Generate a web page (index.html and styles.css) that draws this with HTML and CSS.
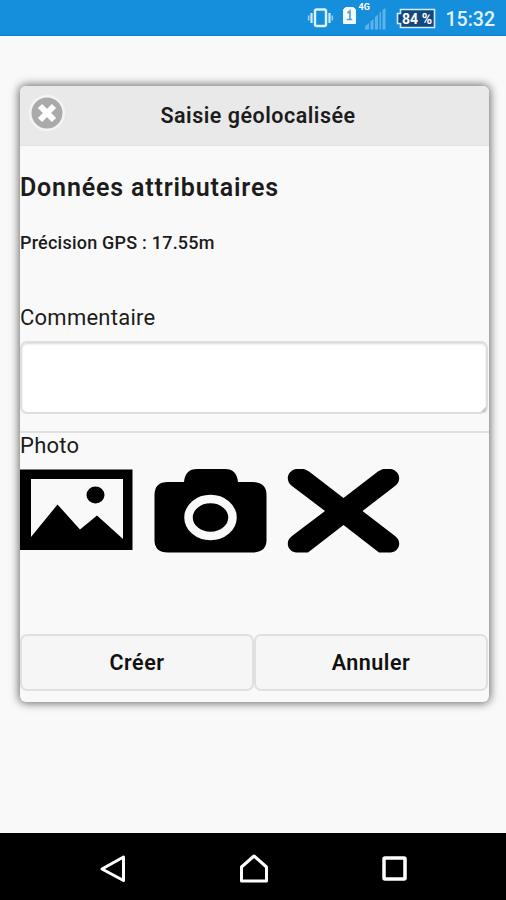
FILE: index.html
```html
<!DOCTYPE html>
<html lang="fr">

<head>
    <meta charset="UTF-8">
    <title>Saisie géolocalisée</title>
    <link rel="stylesheet" href="styles.css">
</head>

<body>

    <div class="statut">
        <svg class="vibreur" width="28" height="22" viewBox="0 0 28 22">
            <rect x="9" y="2.5" width="11" height="16.5" rx="1.5" fill="none" stroke="#dff2ff" stroke-width="2.4" />
            <path d="M5.5 6v10M23.5 6v10" stroke="#cdeaff" stroke-width="2.2" />
            <path d="M2.7 8.5v5M26.3 8.5v5" stroke="#9bd0f4" stroke-width="1.6" />
        </svg>
        <svg class="reseau" width="46" height="32" viewBox="0 0 46 32">
            <path d="M4.5 7.5h8l2 2v14h-12v-14z" fill="#f2faff" stroke="#f2faff" />
            <path d="M6.5 13l2.500-2v8.500M5.800 19.500h5.400" fill="none" stroke="#5e9fca" stroke-width="1.700" />
            <text x="17.500" y="10" class="type">4G</text>
            <path d="M24 29.500v-3l4-3.500v6.500zM29.500 29.500v-8l3-2.500v10.500zM34 29.500v-12.500l3-2.500v15zM38.500 29.500v-16.500l1.500-1.500v18zM41.500 29.500v-19.500l3-2v21.500z" fill="#5db2ea" />
        </svg>
        <svg class="batterie" width="40" height="22" viewBox="0 0 40 22">
            <path d="M4.500 1.500h34v18h-34v-4h-3v-10h3z" fill="#14487c" stroke="#cdeaff" stroke-width="1.600" />
            <text x="6" y="15.500" class="niveau" textLength="30">84 %</text>
        </svg>
        <span class="heure">15:32</span>
    </div>

    <main class="page">
        <section class="popup">
            <header class="entete">
                <button class="fermer" aria-label="Fermer">
                    <svg width="38" height="38" viewBox="0 0 38 38">
                        <circle cx="19" cy="19" r="18" fill="#f4f4f4" />
                        <circle cx="19" cy="19" r="15.500" fill="#aaa" />
                        <path d="M12 12l14 14M26 12l-14 14" stroke="#fff" stroke-width="6" />
                    </svg>
                </button>
                <h1>Saisie géolocalisée</h1>
            </header>

            <h2>Données attributaires</h2>
            <h4>Précision GPS : 17.55m</h4>

            <div class="champ">
                <label for="commentaire">Commentaire</label>
                <textarea id="commentaire"></textarea>
            </div>

            <div class="photo">
                <span>Photo</span>
                <div class="icones">
                    <svg width="113" height="84" viewBox="0 0 113 84">
                        <rect x="0" y="0.500" width="112.500" height="80.500" />
                        <path d="M11 10h92v60L77 46.500 60 60.500 37.500 35.500 11 68z" fill="#f9f9f9" />
                        <ellipse cx="75.500" cy="26" rx="9" ry="8.500" />
                    </svg>
                    <svg width="113" height="84" viewBox="0 0 113 84">
                        <path d="M14 13H30C31 4 35 0 43 0H71C79 0 83 4 84 13H98Q112.500 13 112.500 26V71Q112.500 83.500 98 83.500H14Q0.500 83.500 0.500 71V26Q0.500 13 14 13z" />
                        <ellipse cx="56.500" cy="48.500" rx="22" ry="18.500" fill="none" stroke="#f9f9f9" stroke-width="8.500" />
                    </svg>
                    <svg width="113" height="84" viewBox="0 0 113 84">
                        <path d="M5 17C-2 12 0 2 9 0 15-1 19 0 24 4L56.500 29 89 4C94 0 98-1 104 0 113 2 115 12 108 17L75.500 42 108 67C115 72 113 82 104 83.500H92L56.500 56 21 83.500H9C0 82-2 72 5 67L38 42z" />
                    </svg>
                </div>
            </div>

            <div class="knapper">
                <button class="action">Créer</button>
                <button class="action">Annuler</button>
            </div>
        </section>
    </main>

    <nav class="navigation">
        <svg width="30" height="32" viewBox="0 0 30 32">
            <path d="M24.500 4v23.500L3 16z" fill="none" stroke="#fff" stroke-width="3" stroke-linejoin="round" />
        </svg>
        <svg width="30" height="32" viewBox="0 0 30 32">
            <path d="M15 3L27.500 14v14H2.500V14z" fill="none" stroke="#fff" stroke-width="3" stroke-linejoin="round" />
        </svg>
        <svg width="30" height="32" viewBox="0 0 30 32">
            <rect x="5" y="5" width="21" height="21" rx="1" fill="none" stroke="#fff" stroke-width="3.500" />
        </svg>
    </nav>

</body>

</html>
```

FILE: styles.css
```css
body {
    margin: 0;
    height: 900px;
    display: flex;
    flex-direction: column;
    overflow: hidden;
    background-color: #f9f9f9;
    color: #1c1c1c;
    font-family: Roboto, "Liberation Sans", sans-serif;
}

h1,
h2,
h4 {
    margin: 0;
    white-space: nowrap;
}

svg {
    display: block;
    flex-shrink: 0;
}

.statut {
    display: flex;
    height: 36px;
    box-sizing: border-box;
    padding-right: 11px;
    justify-content: flex-end;
    align-items: flex-start;
    background-color: #158fdc;
    border-bottom: 1px solid #0d80cb;
}

.vibreur {
    margin-top: 7px;
    margin-right: 7px;
}

.reseau {
    margin-right: 9px;
}

.batterie {
    margin-top: 8px;
    margin-right: 10px;
}

.type {
    font-size: 9px;
    font-weight: 700;
    fill: #fff;
}

.niveau {
    font-size: 14px;
    font-weight: 700;
    fill: #fff;
}

.heure {
    font-size: 19.500px;
    line-height: 39px;
    font-weight: 500;
    color: #e3f3fe;
}

.page {
    flex: 1;
    padding: 50px 17px 0 20px;
}

.popup {
    height: 616px;
    display: flex;
    flex-direction: column;
    border-radius: 6px;
    background-color: #f9f9f9;
    box-shadow: 0 0 10px 1px rgba(0, 0, 0, 0.6);
}

.entete {
    display: flex;
    height: 59px;
    align-items: center;
    background-color: #e9e9e9;
    border-bottom: 1px solid #e4e4e4;
    border-radius: 6px 6px 0 0;
}

.fermer {
    margin: -5px 0 0 8px;
    padding: 0;
    border: 0;
    background: none;
}

.entete h1 {
    flex: 1;
    padding-right: 39px;
    text-align: center;
    font-size: 21.500px;
    font-weight: 600;
    letter-spacing: 0.5px;
}

h2 {
    margin-top: 26px;
    font-size: 25px;
    line-height: 32px;
    font-weight: 600;
    letter-spacing: 0.83px;
}

h4 {
    margin-top: 27px;
    font-size: 18px;
    line-height: 24px;
    font-weight: 500;
    letter-spacing: 0.22px;
}

.champ {
    margin-top: 49px;
}

label,
.photo span {
    display: block;
    font-size: 22px;
    line-height: 28px;
    letter-spacing: 0.25px;
}

textarea {
    display: block;
    width: 468px;
    height: 73px;
    margin-top: 9px;
    box-sizing: border-box;
    border: 2px solid #dedede;
    border-radius: 7px;
    background-color: #fff;
    box-shadow: inset 0 1px 2px rgba(0, 0, 0, 0.15);
}

textarea::-webkit-resizer {
    background: linear-gradient(135deg, transparent 80%, #ccc 80%);
}

.photo {
    margin-top: 17px;
    border-top: 2px solid #e0e0e0;
}

.photo span {
    line-height: 26px;
}

.icones {
    display: flex;
    gap: 20.500px;
    margin-top: 10px;
}

.knapper {
    display: flex;
    margin-top: auto;
    margin-bottom: 11px;
    margin-right: 1px;
}

.action {
    flex: 1;
    height: 57px;
    border: 2px solid #e0e0e0;
    border-radius: 7px;
    background-color: #f6f6f6;
    font-family: inherit;
    font-size: 21.500px;
    font-weight: 600;
    letter-spacing: 0.5px;
    color: #111;
}

.navigation {
    display: flex;
    height: 67px;
    box-sizing: border-box;
    padding: 4px 97px 0 99px;
    justify-content: space-between;
    align-items: center;
    background-color: #000;
}
```
